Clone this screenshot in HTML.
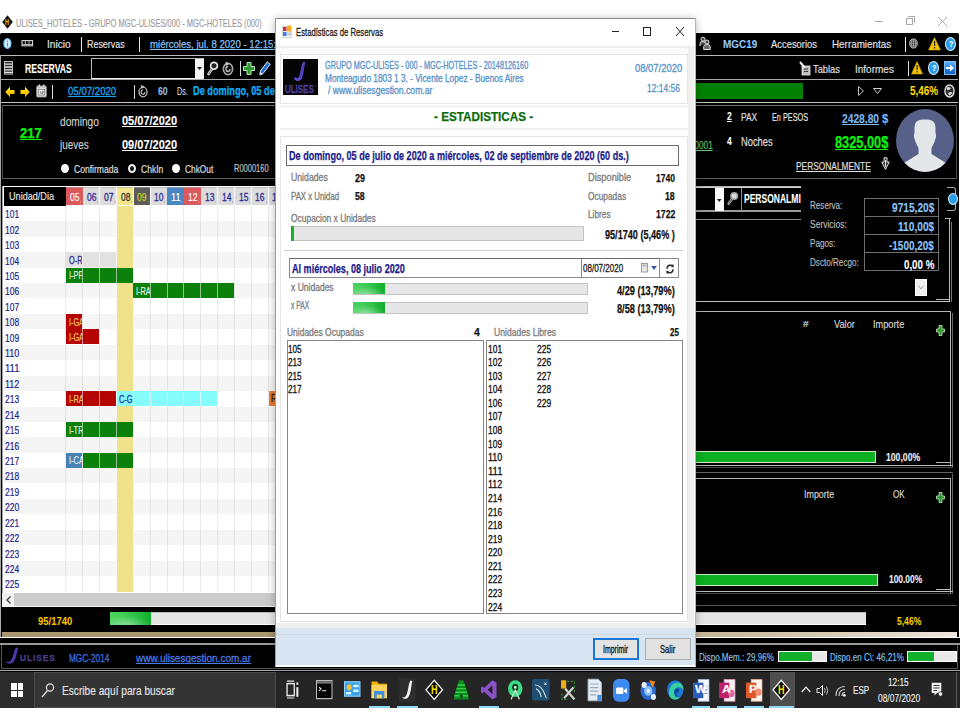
<!DOCTYPE html>
<html lang="es">
<head>
<meta charset="utf-8">
<title>ULISES_HOTELES - Estadísticas de Reservas</title>
<style>
html,body{margin:0;padding:0;background:#fff;}
body{width:960px;height:720px;overflow:hidden;font-family:"Liberation Sans",sans-serif;}
#s{position:relative;width:960px;height:720px;overflow:hidden;background:#fff;}
#s div,#s span,#s a,#s svg,#s button{position:absolute;box-sizing:border-box;}
#s .t{white-space:nowrap;transform-origin:0 50%;margin:0;padding:0;text-decoration-skip-ink:none;}
#s svg{overflow:visible;}
</style>
</head>
<body>
<div id="s">
<svg style="left:1.7px;top:15px;" width="11" height="14"><path d="M5.5 0.3L10.8 7L5.5 13.7L0.2 7Z" fill="#141414"/></svg>
<span class="t" style="left:5px;top:15.9px;font-size:9px;line-height:12px;color:#d4c400;font-weight:bold;transform:scaleX(0.614)">H</span>
<span class="t" style="left:16.4px;top:15.6px;font-size:11.5px;line-height:15px;color:#9a9a9a;-webkit-text-stroke:0.14px #9a9a9a;transform:scaleX(0.655)">ULISES_HOTELES - GRUPO MGC-ULISES/000 - MGC-HOTELES (000)</span>
<div style="left:875px;top:21px;width:8px;height:1px;background:#aaa;"></div>
<div style="left:906px;top:18px;width:7px;height:7px;background:transparent;border:1px solid #aaa;"></div>
<div style="left:908px;top:16px;width:7px;height:7px;background:transparent;border:1px solid #aaa;border-left:none;border-bottom:none;"></div>
<svg style="left:938px;top:17px;" width="9" height="9"><path d="M0 0L9 9M9 0L0 9" stroke="#aaa" stroke-width="1" fill="none"/></svg>
<div style="left:0px;top:33px;width:958.6px;height:639.5px;background:#000;border-radius:1.5px 1.5px 0 0;"></div>
<div style="left:0px;top:638px;width:960px;height:34.5px;background:#000;"></div>
<div style="left:1px;top:54.6px;width:957px;height:1.7px;background:#bcbcbc;"></div>
<svg style="left:3px;top:38px;" width="9" height="12"><ellipse cx="4.4" cy="5.5" rx="3.4" ry="4.7" fill="#eaf6ff" stroke="#78ccfa" stroke-width="1.5"/><rect x="3.8" y="4.8" width="1.3" height="3.6" fill="#2a9ae4"/><rect x="3.8" y="2.6" width="1.3" height="1.4" fill="#2a9ae4"/></svg>
<svg style="left:21px;top:40px;" width="13" height="7"><rect x="1" y="0.6" width="10.6" height="5.2" fill="#151515" stroke="#e4e4e4" stroke-width="1"/><path d="M4.3 1V4.2M8 1V4.2" stroke="#cfcfcf" stroke-width="0.8"/><path d="M1.5 4.6H11" stroke="#d8d8d8" stroke-width="0.9"/></svg>
<span class="t" style="left:47px;top:37.0px;font-size:11.04px;line-height:14px;color:#e4e4e4;-webkit-text-stroke:0.14px #e4e4e4;transform:scaleX(0.923)">Inicio</span>
<div style="left:81px;top:37.3px;width:1.3px;height:14.4px;background:#e8e8e8;"></div>
<span class="t" style="left:87px;top:37.0px;font-size:11.04px;line-height:14px;color:#e4e4e4;-webkit-text-stroke:0.14px #e4e4e4;transform:scaleX(0.809)">Reservas</span>
<div style="left:139px;top:37.3px;width:1.3px;height:14.4px;background:#e8e8e8;"></div>
<span class="t" style="left:150px;top:37.0px;font-size:11.04px;line-height:14px;color:#84c2f4;text-decoration:underline;-webkit-text-stroke:0.25px #84c2f4;transform:scaleX(0.871)">miércoles, jul. 8 2020 - 12:15:</span>
<svg style="left:699px;top:36px;" width="13" height="15"><circle cx="4" cy="3.2" r="2" fill="#444" stroke="#e4e4e4" stroke-width="1"/><path d="M1 10V7.5Q1 5.5 4 5.5Q6.5 5.5 6.5 7.5" fill="#555" stroke="#e4e4e4" stroke-width="1"/><circle cx="8" cy="6" r="2" fill="#444" stroke="#e4e4e4" stroke-width="1"/><path d="M4.7 13.5V10.5Q4.7 8.5 8 8.5Q11.2 8.5 11.2 10.5V13.5Z" fill="#666" stroke="#e4e4e4" stroke-width="1"/></svg>
<span class="t" style="left:723px;top:36.5px;font-size:11.4px;line-height:15px;color:#8cc8f8;font-weight:bold;-webkit-text-stroke:0.1px #8cc8f8;transform:scaleX(0.872)">MGC19</span>
<span class="t" style="left:771px;top:37.0px;font-size:11.04px;line-height:14px;color:#e4e4e4;-webkit-text-stroke:0.14px #e4e4e4;transform:scaleX(0.852)">Accesorios</span>
<span class="t" style="left:832px;top:37.0px;font-size:11.04px;line-height:14px;color:#e4e4e4;-webkit-text-stroke:0.14px #e4e4e4;transform:scaleX(0.894)">Herramientas</span>
<div style="left:905px;top:37.3px;width:1.3px;height:14.4px;background:#e8e8e8;"></div>
<svg style="left:909px;top:38px;" width="9" height="11"><ellipse cx="4.5" cy="5.5" rx="3.8" ry="4.6" fill="#3a3a3a" stroke="#c8c8c8" stroke-width="1"/><path d="M0.7 5.5H8.3M1.5 3.2H7.5M1.5 7.8H7.5M4.5 1V10M2.8 1.5Q1.8 5.5 2.8 9.5M6.2 1.5Q7.2 5.5 6.2 9.5" stroke="#bdbdbd" stroke-width="0.6" fill="none"/></svg>
<svg style="left:928px;top:37px;" width="13" height="14"><path d="M6.5 0.5L12.5 13H0.5Z" fill="#f5c400" stroke="#c79a00" stroke-width="0.6"/><rect x="6" y="4" width="1.2" height="5" fill="#222"/><rect x="6" y="10" width="1.2" height="1.5" fill="#222"/></svg>
<div style="left:945px;top:37px;width:11px;height:14px;border-radius:50%;background:#2a9fe8;border:1px solid #d4ecff;"></div>
<span class="t" style="left:948.5px;top:38.0px;font-size:9.5px;line-height:12px;color:#fff;font-weight:bold;-webkit-text-stroke:0.1px #fff;transform:scaleX(0.750)">?</span>
<div style="left:1px;top:79px;width:957px;height:1px;background:#a8a8a8;"></div>
<svg style="left:4px;top:61px;" width="9" height="14"><rect x="0.5" y="0.5" width="8" height="12.6" fill="#2a2a2a" stroke="#d8d8d8" stroke-width="0.9"/><path d="M1 3.2H8M1 6H8M1 8.8H8M1 11.4H8" stroke="#e4e4e4" stroke-width="1.3"/></svg>
<span class="t" style="left:25px;top:60.5px;font-size:12.35px;line-height:16px;color:#fff;font-weight:bold;-webkit-text-stroke:0.1px #fff;transform:scaleX(0.701)">RESERVAS</span>
<div style="left:91px;top:58px;width:113px;height:21px;background:#000;border:1px solid #b8b8b8;border-bottom-color:#f4f4f4;"></div>
<div style="left:195px;top:59px;width:9px;height:19px;background:#f4f4f4;"></div>
<svg style="left:197px;top:67px;" width="5" height="3"><path d="M0 0H5L2.5 3Z" fill="#222"/></svg>
<svg style="left:207px;top:61px;" width="12" height="15"><circle cx="7" cy="4.8" r="3.4" fill="#222" stroke="#e8e8e8" stroke-width="1.7"/><path d="M5 8L1.5 13" stroke="#e8e8e8" stroke-width="2.6" stroke-linecap="round"/><path d="M5 8L1.5 13" stroke="#333" stroke-width="0.8"/></svg>
<svg style="left:222px;top:61px;" width="12" height="15"><ellipse cx="6" cy="8" rx="4.6" ry="5.6" fill="none" stroke="#a8a8a8" stroke-width="1.6"/><path d="M6 5.5a2 2.5 0 1 0 2 2.5" fill="none" stroke="#b8b8b8" stroke-width="1.4"/><path d="M3.5 0.5L7.5 2.8L4 5Z" fill="#c4c4c4"/></svg>
<div style="left:240px;top:61px;width:1px;height:15px;background:#ddd;"></div>
<svg style="left:243px;top:62px;" width="12" height="13"><path d="M4 0.5H8V4.5H11.5V8.5H8V12.5H4V8.5H0.5V4.5H4Z" fill="#2e9a2e" stroke="#bfe8bf" stroke-width="1"/></svg>
<svg style="left:259px;top:61px;" width="12" height="15"><path d="M8.3 0.8L11.2 3.4L4 12.6L0.8 14L1.4 10Z" fill="#1f6fd4" stroke="#e4f0ff" stroke-width="1"/><path d="M1.2 11.5L3.2 13" stroke="#fff" stroke-width="1"/></svg>
<svg style="left:799px;top:61px;" width="12" height="15"><rect x="3" y="5" width="8" height="9" fill="#bbb" stroke="#eee" stroke-width="0.8"/><path d="M1 1L6 7" stroke="#eee" stroke-width="2"/><path d="M5 8H9M5 10.5H9" stroke="#333" stroke-width="1"/></svg>
<span class="t" style="left:813px;top:61.5px;font-size:11.04px;line-height:14px;color:#e4e4e4;-webkit-text-stroke:0.14px #e4e4e4;transform:scaleX(0.844)">Tablas</span>
<span class="t" style="left:855px;top:61.5px;font-size:11.04px;line-height:14px;color:#e4e4e4;-webkit-text-stroke:0.14px #e4e4e4;transform:scaleX(0.907)">Informes</span>
<div style="left:908px;top:61px;width:1px;height:15px;background:#ddd;"></div>
<svg style="left:911px;top:61px;" width="12" height="14"><path d="M6 0.5L11.5 13H0.5Z" fill="#f5c400" stroke="#c79a00" stroke-width="0.6"/><rect x="5.5" y="4" width="1.2" height="5" fill="#222"/><rect x="5.5" y="10" width="1.2" height="1.5" fill="#222"/></svg>
<div style="left:928px;top:61px;width:11px;height:14px;border-radius:50%;background:#2a9fe8;border:1px solid #d4ecff;"></div>
<span class="t" style="left:931.5px;top:62.0px;font-size:9.5px;line-height:12px;color:#fff;font-weight:bold;-webkit-text-stroke:0.1px #fff;transform:scaleX(0.750)">?</span>
<div style="left:944px;top:61px;width:12px;height:14px;background:#2f86dc;background:linear-gradient(#5ab4f6,#2a86e0 50%,#1a5cc0);border:1px solid #7fc0ff;"></div>
<svg style="left:946px;top:64px;" width="8" height="8"><path d="M0 3H4V0.5L8 4L4 7.5V5H0Z" fill="#fff"/></svg>
<div style="left:1px;top:101.6px;width:957px;height:1px;background:#c4c4c4;"></div>
<svg style="left:4.6px;top:85.6px;" width="10" height="12"><defs><linearGradient id="ya" x1="0" y1="0" x2="0" y2="1"><stop offset="0" stop-color="#fff06a"/><stop offset="0.45" stop-color="#ffd400"/><stop offset="1" stop-color="#e89a00"/></linearGradient></defs><path d="M0.3 6L5 0.8V4H9.5V8H5V11.2Z" fill="url(#ya)"/></svg>
<svg style="left:20.2px;top:85.6px;" width="10" height="12"><path d="M9.7 6L5 0.8V4H0.5V8H5V11.2Z" fill="url(#ya)"/></svg>
<svg style="left:36px;top:84px;" width="11" height="14"><rect x="0.7" y="2" width="9.6" height="11" rx="1" fill="#dcdcdc" stroke="#a0a0a0" stroke-width="0.8"/><rect x="2.3" y="5.5" width="6.4" height="5.5" fill="#f8f8f8" stroke="#666" stroke-width="0.6"/><path d="M4.3 7V10M5.6 7.2H7.4V8.5H5.8V10H7.5" stroke="#444" stroke-width="0.6" fill="none"/><rect x="2.5" y="0.5" width="1.6" height="3.2" rx="0.6" fill="#f0f0f0" stroke="#777" stroke-width="0.4"/><rect x="6.9" y="0.5" width="1.6" height="3.2" rx="0.6" fill="#f0f0f0" stroke="#777" stroke-width="0.4"/></svg>
<div style="left:52px;top:85px;width:1px;height:14px;background:#ddd;"></div>
<span class="t" style="left:68px;top:84.0px;font-size:11.04px;line-height:14px;color:#18a4ee;text-decoration:underline;-webkit-text-stroke:0.3px #18a4ee;transform:scaleX(0.873)">05/07/2020</span>
<div style="left:134px;top:85px;width:1px;height:14px;background:#ddd;"></div>
<svg style="left:138px;top:84px;" width="10" height="14"><ellipse cx="5" cy="8" rx="4" ry="4.8" fill="none" stroke="#bdbdbd" stroke-width="1.3"/><path d="M5 5.8a1.8 2.2 0 1 0 1.8 2.2" fill="none" stroke="#c8c8c8" stroke-width="1.1"/><path d="M3 0.8L6.8 3L3.4 4.8Z" fill="#c8c8c8"/></svg>
<span class="t" style="left:158px;top:83.5px;font-size:11.4px;line-height:15px;color:#8fbde6;font-weight:bold;-webkit-text-stroke:0.1px #8fbde6;transform:scaleX(0.769)">60</span>
<span class="t" style="left:177px;top:84.0px;font-size:11.04px;line-height:14px;color:#d8d8d8;-webkit-text-stroke:0.14px #d8d8d8;transform:scaleX(0.647)">Ds.</span>
<span class="t" style="left:193px;top:83.0px;font-size:12.35px;line-height:16px;color:#10aef4;font-weight:bold;-webkit-text-stroke:0.25px #10aef4;transform:scaleX(0.745)">De domingo, 05 de</span>
<div style="left:690px;top:83px;width:113px;height:16px;background:#018001;"></div>
<svg style="left:858px;top:86px;" width="6" height="10"><path d="M0.5 0.5L5.5 5L0.5 9.5Z" fill="none" stroke="#bbb" stroke-width="1"/></svg>
<svg style="left:873px;top:88px;" width="9" height="6"><path d="M0.5 0.5H8.5L4.5 5.5Z" fill="none" stroke="#ccc" stroke-width="1"/></svg>
<span class="t" style="left:910px;top:83.0px;font-size:12.35px;line-height:16px;color:#f6dc00;font-weight:bold;-webkit-text-stroke:0.1px #f6dc00;transform:scaleX(0.800)">5,46%</span>
<svg style="left:944px;top:84px;" width="11" height="14"><ellipse cx="5.5" cy="7" rx="4.6" ry="6" fill="#2a2a2a" stroke="#e0e0e0" stroke-width="1.4"/><path d="M2.5 4Q5 2 7 4.5Q5 6 3.5 6.5ZM4 9Q6.5 7.5 8.5 8.5Q7.5 11 5 11.5Z" fill="#d8d8d8"/></svg>
<div style="left:2px;top:104.6px;width:955px;height:74.6px;background:#000;border:1px solid #4a4a4a;border-top:1px solid #707070;border-bottom:1px solid #5a5a5a;"></div>
<span class="t" style="left:20px;top:124.3px;font-size:14.25px;line-height:19px;color:#0cf20c;font-weight:bold;text-decoration:underline;-webkit-text-stroke:0.25px #0cf20c;transform:scaleX(0.917)">217</span>
<span class="t" style="left:60px;top:113.5px;font-size:11.96px;line-height:16px;color:#d0d0d0;-webkit-text-stroke:0.14px #d0d0d0;transform:scaleX(0.848)">domingo</span>
<span class="t" style="left:122px;top:111.7px;font-size:12.82px;line-height:17px;color:#fff;font-weight:bold;text-decoration:underline;-webkit-text-stroke:0.1px #fff;transform:scaleX(0.859)">05/07/2020</span>
<span class="t" style="left:60px;top:136.5px;font-size:11.96px;line-height:16px;color:#d0d0d0;-webkit-text-stroke:0.14px #d0d0d0;transform:scaleX(0.829)">jueves</span>
<span class="t" style="left:122px;top:135.7px;font-size:12.82px;line-height:17px;color:#fff;font-weight:bold;text-decoration:underline;-webkit-text-stroke:0.1px #fff;transform:scaleX(0.859)">09/07/2020</span>
<div style="left:61px;top:164px;width:8px;height:9px;border-radius:50%;background:#fff;"></div>
<span class="t" style="left:74px;top:162.5px;font-size:10.12px;line-height:13px;color:#e0e0e0;-webkit-text-stroke:0.14px #e0e0e0;transform:scaleX(0.846)">Confirmada</span>
<div style="left:128px;top:164px;width:8px;height:9px;border-radius:50%;background:#111;border:2px solid #f0f0f0;"></div>
<span class="t" style="left:141px;top:162.5px;font-size:10.12px;line-height:13px;color:#e0e0e0;-webkit-text-stroke:0.14px #e0e0e0;transform:scaleX(0.846)">ChkIn</span>
<div style="left:172px;top:164px;width:8px;height:9px;border-radius:50%;background:#fff;"></div>
<span class="t" style="left:185px;top:162.5px;font-size:10.12px;line-height:13px;color:#e0e0e0;-webkit-text-stroke:0.14px #e0e0e0;transform:scaleX(0.824)">ChkOut</span>
<span class="t" style="left:234px;top:162.3px;font-size:10.3px;line-height:13px;color:#c8c8c8;-webkit-text-stroke:0.14px #c8c8c8;transform:scaleX(0.729)">R0000160</span>
<span class="t" style="left:689.5px;top:137.8px;font-size:10.5px;line-height:14px;color:#6fc86f;text-decoration:underline;-webkit-text-stroke:0.14px #6fc86f;transform:scaleX(0.776)">00001</span>
<span class="t" style="left:726.5px;top:109.0px;font-size:11.4px;line-height:15px;color:#fff;font-weight:bold;text-decoration:underline;-webkit-text-stroke:0.1px #fff;transform:scaleX(0.750)">2</span>
<span class="t" style="left:741px;top:109.8px;font-size:11.04px;line-height:14px;color:#e0e0e0;-webkit-text-stroke:0.14px #e0e0e0;transform:scaleX(0.762)">PAX</span>
<span class="t" style="left:772px;top:110.6px;font-size:10.12px;line-height:13px;color:#e8e8e8;-webkit-text-stroke:0.14px #e8e8e8;transform:scaleX(0.720)">En PESOS</span>
<span class="t" style="left:842px;top:110.0px;font-size:13.3px;line-height:17px;color:#7ab8f0;font-weight:bold;text-decoration:underline;-webkit-text-stroke:0.1px #7ab8f0;transform:scaleX(0.771)">2428,80</span>
<span class="t" style="left:882px;top:110.0px;font-size:13.3px;line-height:17px;color:#7ab8f0;font-weight:bold;-webkit-text-stroke:0.1px #7ab8f0;transform:scaleX(0.857)">$</span>
<span class="t" style="left:726.5px;top:134.0px;font-size:11.4px;line-height:15px;color:#fff;font-weight:bold;-webkit-text-stroke:0.1px #fff;transform:scaleX(0.750)">4</span>
<span class="t" style="left:741px;top:134.0px;font-size:11.96px;line-height:16px;color:#e0e0e0;-webkit-text-stroke:0.14px #e0e0e0;transform:scaleX(0.780)">Noches</span>
<span class="t" style="left:835px;top:131.5px;font-size:16.15px;line-height:21px;color:#0cf20c;font-weight:bold;text-decoration:underline;-webkit-text-stroke:0.25px #0cf20c;transform:scaleX(0.791)">8325,00$</span>
<span class="t" style="left:796px;top:158.8px;font-size:11.04px;line-height:14px;color:#e0e0e0;text-decoration:underline;-webkit-text-stroke:0.14px #e0e0e0;transform:scaleX(0.758)">PERSONALMENTE</span>
<svg style="left:881px;top:157px;" width="9" height="14"><path d="M3 0.7H6V5H8.3L4.5 12.5L0.7 5H3Z" fill="#3a3a3a" stroke="#d8d8d8" stroke-width="1"/><path d="M4.5 3V10" stroke="#e8e8e8" stroke-width="1"/></svg>
<svg style="left:896px;top:109px;" width="58" height="63" viewBox="0 0 58 63"><ellipse cx="29" cy="31.5" rx="29" ry="31.5" fill="#566089"/><clipPath id="av"><ellipse cx="29" cy="31.5" rx="29" ry="31.5"/></clipPath><g clip-path="url(#av)" fill="#e3e7ea"><path d="M18.5 19C18.5 11.5 23 10.5 29 10.5S39.5 11.5 39.5 19V24C40.3 25 40.3 29 39.3 30C38.5 34 36.5 37 35.5 39V45L50 54V68H8V54L22.5 45V39C21.5 37 19.5 34 18.7 30C17.7 29 17.7 25 18.5 24Z"/></g></svg>
<div style="left:696px;top:185.6px;width:104.6px;height:2.6px;background:#c8c8c8;background:linear-gradient(#8a8a8a,#e4e4e4 60%,#bdbdbd);"></div>
<div style="left:696px;top:210.4px;width:104.6px;height:1.4px;background:#9a9a9a;"></div>
<div style="left:714.8px;top:188px;width:9px;height:23px;background:#f8f8f8;"></div>
<svg style="left:717px;top:198.5px;" width="4.5" height="3"><path d="M0 0H4.5L2.25 3Z" fill="#222"/></svg>
<svg style="left:726.5px;top:190.5px;" width="12" height="15"><circle cx="7.2" cy="5" r="3.3" fill="#d8d8d8" stroke="#9c9c9c" stroke-width="1.5"/><path d="M5 8L1.7 12.6" stroke="#a8a8a8" stroke-width="2.6" stroke-linecap="round"/><path d="M5 8L1.7 12.6" stroke="#222" stroke-width="0.7"/></svg>
<div style="left:741px;top:188px;width:1.2px;height:23px;background:#8c8c8c;"></div>
<span class="t" style="left:744px;top:191.3px;font-size:12.35px;line-height:16px;color:#fff;font-weight:bold;-webkit-text-stroke:0.1px #fff;transform:scaleX(0.690)">PERSONALMI</span>
<div style="left:696px;top:218.5px;width:104.6px;height:1.2px;background:#8c8c8c;"></div>
<span class="t" style="left:810px;top:198.5px;font-size:10.12px;line-height:13px;color:#bdbdbd;-webkit-text-stroke:0.14px #bdbdbd;transform:scaleX(0.800)">Reserva:</span>
<div style="left:864px;top:198px;width:75px;height:19px;background:#000;border:1px solid #6e6e6e;"></div>
<span class="t" style="left:892px;top:198.5px;font-size:13.3px;line-height:17px;color:#8ec6f7;font-weight:bold;-webkit-text-stroke:0.1px #8ec6f7;transform:scaleX(0.764)">9715,20$</span>
<span class="t" style="left:810px;top:217.5px;font-size:10.12px;line-height:13px;color:#bdbdbd;-webkit-text-stroke:0.14px #bdbdbd;transform:scaleX(0.841)">Servicios:</span>
<div style="left:864px;top:216px;width:75px;height:19px;background:#000;border:1px solid #6e6e6e;"></div>
<span class="t" style="left:898px;top:217.5px;font-size:13.3px;line-height:17px;color:#8ec6f7;font-weight:bold;-webkit-text-stroke:0.1px #8ec6f7;transform:scaleX(0.766)">110,00$</span>
<span class="t" style="left:810px;top:236.5px;font-size:10.12px;line-height:13px;color:#bdbdbd;-webkit-text-stroke:0.14px #bdbdbd;transform:scaleX(0.806)">Pagos:</span>
<div style="left:864px;top:234px;width:75px;height:19px;background:#000;border:1px solid #6e6e6e;"></div>
<span class="t" style="left:889px;top:236.5px;font-size:13.3px;line-height:17px;color:#8ec6f7;font-weight:bold;-webkit-text-stroke:0.1px #8ec6f7;transform:scaleX(0.750)">-1500,20$</span>
<span class="t" style="left:810px;top:255.5px;font-size:10.12px;line-height:13px;color:#bdbdbd;-webkit-text-stroke:0.14px #bdbdbd;transform:scaleX(0.803)">Dscto/Recgo:</span>
<div style="left:864px;top:252px;width:75px;height:19px;background:#000;border:1px solid #6e6e6e;"></div>
<span class="t" style="left:904px;top:255.5px;font-size:13.3px;line-height:17px;color:#fff;font-weight:bold;-webkit-text-stroke:0.1px #fff;transform:scaleX(0.732)">0,00 %</span>
<div style="left:915px;top:279px;width:12px;height:17px;background:#efefef;border:1px solid #fff;"></div>
<svg style="left:918px;top:285px;" width="6" height="5"><path d="M0.5 0.5L3 4L5.5 0.5" fill="none" stroke="#aaa" stroke-width="1"/></svg>
<div style="left:947px;top:187px;width:9px;height:24px;background:transparent;border:1px solid #aaa;border-left:none;border-radius:0 3px 3px 0;"></div>
<div style="left:948px;top:193px;width:10px;height:12px;border-radius:50%;background:#2a9fe8;border:1px solid #d4ecff;"></div>
<div style="left:945px;top:218px;width:6px;height:1px;background:#bdbdbd;"></div>
<div style="left:949px;top:218px;width:1px;height:84px;background:#bdbdbd;"></div>
<div style="left:951px;top:222px;width:1px;height:80px;background:#777;"></div>
<div style="left:696px;top:301px;width:254px;height:1px;background:#c4c4c4;"></div>
<div style="left:936px;top:299px;width:14px;height:1px;background:#bbb;"></div>
<div style="left:696px;top:311px;width:255px;height:1px;background:#b4b4b4;"></div>
<div style="left:950px;top:311px;width:1px;height:155px;background:#b4b4b4;"></div>
<div style="left:952px;top:313px;width:1px;height:155px;background:#666;"></div>
<span class="t" style="left:802.5px;top:318.0px;font-size:9.2px;line-height:12px;color:#e0e0e0;-webkit-text-stroke:0.14px #e0e0e0;transform:scaleX(1.100)">#</span>
<span class="t" style="left:834px;top:317.5px;font-size:10.12px;line-height:13px;color:#d8d8d8;-webkit-text-stroke:0.14px #d8d8d8;transform:scaleX(0.913)">Valor</span>
<span class="t" style="left:873px;top:317.5px;font-size:10.12px;line-height:13px;color:#d8d8d8;-webkit-text-stroke:0.14px #d8d8d8;transform:scaleX(0.912)">Importe</span>
<svg style="left:936px;top:325px;" width="9" height="11"><path d="M3 0.5H6V4H8.5V7H6V10.5H3V7H0.5V4H3Z" fill="#2e9a2e" stroke="#bfe8bf" stroke-width="0.8"/></svg>
<div style="left:696px;top:451px;width:180px;height:12px;background:#0cb020;border:1px solid #d0e8d0;border-left:none;"></div>
<span class="t" style="left:886px;top:451.0px;font-size:10.45px;line-height:14px;color:#f0f0f0;font-weight:bold;-webkit-text-stroke:0.1px #f0f0f0;transform:scaleX(0.829)">100,00%</span>
<div style="left:936px;top:462px;width:14px;height:1px;background:#bbb;"></div>
<div style="left:696px;top:465px;width:257px;height:1px;background:#bbb;"></div>
<div style="left:696px;top:467px;width:257px;height:1px;background:#444;"></div>
<div style="left:696px;top:472px;width:257px;height:1px;background:#666;"></div>
<div style="left:696px;top:478px;width:254px;height:1px;background:#b4b4b4;"></div>
<div style="left:950px;top:478px;width:1px;height:115px;background:#b4b4b4;"></div>
<div style="left:952px;top:474px;width:1px;height:119px;background:#666;"></div>
<span class="t" style="left:804px;top:487.5px;font-size:10.12px;line-height:13px;color:#d8d8d8;-webkit-text-stroke:0.14px #d8d8d8;transform:scaleX(0.882)">Importe</span>
<span class="t" style="left:893px;top:487.5px;font-size:10.12px;line-height:13px;color:#d8d8d8;-webkit-text-stroke:0.14px #d8d8d8;transform:scaleX(0.800)">OK</span>
<svg style="left:936px;top:492px;" width="9" height="11"><path d="M3 0.5H6V4H8.5V7H6V10.5H3V7H0.5V4H3Z" fill="#2e9a2e" stroke="#bfe8bf" stroke-width="0.8"/></svg>
<div style="left:696px;top:574px;width:182px;height:12px;background:#0cb020;border:1px solid #d0e8d0;border-left:none;"></div>
<span class="t" style="left:889px;top:573.0px;font-size:10.45px;line-height:14px;color:#f0f0f0;font-weight:bold;-webkit-text-stroke:0.1px #f0f0f0;transform:scaleX(0.805)">100.00%</span>
<div style="left:936px;top:589px;width:14px;height:1px;background:#bbb;"></div>
<div style="left:696px;top:591px;width:257px;height:1px;background:#bbb;"></div>
<div style="left:696px;top:593px;width:257px;height:1px;background:#444;"></div>
<div style="left:696px;top:605px;width:261px;height:1px;background:#555;"></div>
<div style="left:0px;top:55px;width:1.3px;height:583px;background:#a8a8a8;"></div>
<div style="left:2.4px;top:186px;width:273.6px;height:421px;background:#fff;"></div>
<div style="left:1.7px;top:186px;width:0.9px;height:421px;background:#a4a4a4;"></div>
<div style="left:4px;top:187px;width:62px;height:19px;background:#000;"></div>
<span class="t" style="left:9px;top:189.8px;font-size:10.12px;line-height:13px;color:#e8e8e8;-webkit-text-stroke:0.14px #e8e8e8;transform:scaleX(0.900)">Unidad/Dia</span>
<div style="left:66.3px;top:186.6px;width:16.35px;height:18.6px;background:#d9595c;border-top:1px solid rgba(160,160,160,0.55);"></div>
<span class="t" style="left:70.0px;top:190.0px;font-size:10.6px;line-height:14px;color:#fff;-webkit-text-stroke:0.14px #fff;transform:scaleX(0.800)">05</span>
<span class="t" style="left:80.2px;top:195.5px;font-size:6.44px;line-height:8px;color:#fff;transform:scaleX(0.600)">,</span>
<div style="left:83.1px;top:186.6px;width:16.35px;height:18.6px;background:#dcdcdc;border-top:1px solid rgba(160,160,160,0.55);"></div>
<span class="t" style="left:86.8px;top:190.0px;font-size:10.6px;line-height:14px;color:#2a2a9a;-webkit-text-stroke:0.3px #2a2a9a;transform:scaleX(0.800)">06</span>
<span class="t" style="left:97.0px;top:195.5px;font-size:6.44px;line-height:8px;color:#2a2a9a;transform:scaleX(0.600)">,</span>
<div style="left:100.0px;top:186.6px;width:16.35px;height:18.6px;background:#dcdcdc;border-top:1px solid rgba(160,160,160,0.55);"></div>
<span class="t" style="left:103.7px;top:190.0px;font-size:10.6px;line-height:14px;color:#2a2a9a;-webkit-text-stroke:0.3px #2a2a9a;transform:scaleX(0.800)">07</span>
<span class="t" style="left:113.9px;top:195.5px;font-size:6.44px;line-height:8px;color:#2a2a9a;transform:scaleX(0.600)">,</span>
<div style="left:116.9px;top:186.6px;width:16.35px;height:18.6px;background:#f3e68c;border-top:1px solid rgba(160,160,160,0.55);"></div>
<span class="t" style="left:120.6px;top:190.0px;font-size:10.6px;line-height:14px;color:#333;-webkit-text-stroke:0.3px #333;transform:scaleX(0.800)">08</span>
<span class="t" style="left:130.8px;top:195.5px;font-size:6.44px;line-height:8px;color:#333;transform:scaleX(0.600)">,</span>
<div style="left:133.7px;top:186.6px;width:16.35px;height:18.6px;background:#5c5c5c;border-top:1px solid rgba(160,160,160,0.55);"></div>
<span class="t" style="left:137.4px;top:190.0px;font-size:10.6px;line-height:14px;color:#d8d820;-webkit-text-stroke:0.14px #d8d820;transform:scaleX(0.800)">09</span>
<span class="t" style="left:147.6px;top:195.5px;font-size:6.44px;line-height:8px;color:#d8d820;transform:scaleX(0.600)">,</span>
<div style="left:150.6px;top:186.6px;width:16.35px;height:18.6px;background:#dcdcdc;border-top:1px solid rgba(160,160,160,0.55);"></div>
<span class="t" style="left:154.2px;top:190.0px;font-size:10.6px;line-height:14px;color:#2a2a9a;-webkit-text-stroke:0.3px #2a2a9a;transform:scaleX(0.800)">10</span>
<span class="t" style="left:164.4px;top:195.5px;font-size:6.44px;line-height:8px;color:#2a2a9a;transform:scaleX(0.650)">,</span>
<div style="left:167.4px;top:186.6px;width:16.35px;height:18.6px;background:#4a86c0;border-top:1px solid rgba(160,160,160,0.55);"></div>
<span class="t" style="left:171.1px;top:190.0px;font-size:10.6px;line-height:14px;color:#fff;-webkit-text-stroke:0.14px #fff;transform:scaleX(0.873)">11</span>
<span class="t" style="left:181.3px;top:195.5px;font-size:6.44px;line-height:8px;color:#fff;transform:scaleX(0.600)">,</span>
<div style="left:184.3px;top:186.6px;width:16.35px;height:18.6px;background:#d9595c;border-top:1px solid rgba(160,160,160,0.55);"></div>
<span class="t" style="left:188.0px;top:190.0px;font-size:10.6px;line-height:14px;color:#fff;-webkit-text-stroke:0.14px #fff;transform:scaleX(0.800)">12</span>
<span class="t" style="left:198.2px;top:195.5px;font-size:6.44px;line-height:8px;color:#fff;transform:scaleX(0.600)">,</span>
<div style="left:201.1px;top:186.6px;width:16.35px;height:18.6px;background:#dcdcdc;border-top:1px solid rgba(160,160,160,0.55);"></div>
<span class="t" style="left:204.8px;top:190.0px;font-size:10.6px;line-height:14px;color:#2a2a9a;-webkit-text-stroke:0.3px #2a2a9a;transform:scaleX(0.800)">13</span>
<span class="t" style="left:215.0px;top:195.5px;font-size:6.44px;line-height:8px;color:#2a2a9a;transform:scaleX(0.600)">,</span>
<div style="left:218.0px;top:186.6px;width:16.35px;height:18.6px;background:#dcdcdc;border-top:1px solid rgba(160,160,160,0.55);"></div>
<span class="t" style="left:221.7px;top:190.0px;font-size:10.6px;line-height:14px;color:#2a2a9a;-webkit-text-stroke:0.3px #2a2a9a;transform:scaleX(0.792)">14</span>
<span class="t" style="left:231.8px;top:195.5px;font-size:6.44px;line-height:8px;color:#2a2a9a;transform:scaleX(0.650)">,</span>
<div style="left:234.8px;top:186.6px;width:16.35px;height:18.6px;background:#dcdcdc;border-top:1px solid rgba(160,160,160,0.55);"></div>
<span class="t" style="left:238.5px;top:190.0px;font-size:10.6px;line-height:14px;color:#2a2a9a;-webkit-text-stroke:0.3px #2a2a9a;transform:scaleX(0.800)">15</span>
<span class="t" style="left:248.7px;top:195.5px;font-size:6.44px;line-height:8px;color:#2a2a9a;transform:scaleX(0.600)">,</span>
<div style="left:251.7px;top:186.6px;width:16.35px;height:18.6px;background:#dcdcdc;border-top:1px solid rgba(160,160,160,0.55);"></div>
<span class="t" style="left:255.4px;top:190.0px;font-size:10.6px;line-height:14px;color:#2a2a9a;-webkit-text-stroke:0.3px #2a2a9a;transform:scaleX(0.800)">16</span>
<span class="t" style="left:265.6px;top:195.5px;font-size:6.44px;line-height:8px;color:#2a2a9a;transform:scaleX(0.600)">,</span>
<div style="left:268.5px;top:186.6px;width:16.35px;height:18.6px;background:#dcdcdc;border-top:1px solid rgba(160,160,160,0.55);"></div>
<span class="t" style="left:272.2px;top:190.0px;font-size:10.6px;line-height:14px;color:#2a2a9a;-webkit-text-stroke:0.3px #2a2a9a;transform:scaleX(0.800)">17</span>
<span class="t" style="left:282.4px;top:195.5px;font-size:6.44px;line-height:8px;color:#2a2a9a;transform:scaleX(0.600)">,</span>
<span class="t" style="left:5.4px;top:207.2px;font-size:10.8px;line-height:14px;color:#1c1c8e;-webkit-text-stroke:0.18px #1c1c8e;transform:scaleX(0.783)">101</span>
<div style="left:4px;top:221.4px;width:272px;height:15.4px;background:#f5f5f5;"></div>
<span class="t" style="left:5.4px;top:222.6px;font-size:10.8px;line-height:14px;color:#1c1c8e;-webkit-text-stroke:0.18px #1c1c8e;transform:scaleX(0.783)">102</span>
<span class="t" style="left:5.4px;top:238.1px;font-size:10.8px;line-height:14px;color:#1c1c8e;-webkit-text-stroke:0.18px #1c1c8e;transform:scaleX(0.783)">103</span>
<div style="left:4px;top:252.3px;width:272px;height:15.4px;background:#f5f5f5;"></div>
<span class="t" style="left:5.4px;top:253.5px;font-size:10.8px;line-height:14px;color:#1c1c8e;-webkit-text-stroke:0.18px #1c1c8e;transform:scaleX(0.783)">104</span>
<span class="t" style="left:5.4px;top:268.9px;font-size:10.8px;line-height:14px;color:#1c1c8e;-webkit-text-stroke:0.18px #1c1c8e;transform:scaleX(0.783)">105</span>
<div style="left:4px;top:283.1px;width:272px;height:15.4px;background:#f5f5f5;"></div>
<span class="t" style="left:5.4px;top:284.3px;font-size:10.8px;line-height:14px;color:#1c1c8e;-webkit-text-stroke:0.18px #1c1c8e;transform:scaleX(0.783)">106</span>
<span class="t" style="left:5.4px;top:299.7px;font-size:10.8px;line-height:14px;color:#1c1c8e;-webkit-text-stroke:0.18px #1c1c8e;transform:scaleX(0.783)">107</span>
<div style="left:4px;top:313.9px;width:272px;height:15.4px;background:#f5f5f5;"></div>
<span class="t" style="left:5.4px;top:315.1px;font-size:10.8px;line-height:14px;color:#1c1c8e;-webkit-text-stroke:0.18px #1c1c8e;transform:scaleX(0.783)">108</span>
<span class="t" style="left:5.4px;top:330.6px;font-size:10.8px;line-height:14px;color:#1c1c8e;-webkit-text-stroke:0.18px #1c1c8e;transform:scaleX(0.783)">109</span>
<div style="left:4px;top:344.8px;width:272px;height:15.4px;background:#f5f5f5;"></div>
<span class="t" style="left:5.4px;top:346.0px;font-size:10.8px;line-height:14px;color:#1c1c8e;-webkit-text-stroke:0.18px #1c1c8e;transform:scaleX(0.829)">110</span>
<span class="t" style="left:5.4px;top:361.4px;font-size:10.8px;line-height:14px;color:#1c1c8e;-webkit-text-stroke:0.18px #1c1c8e;transform:scaleX(0.881)">111</span>
<div style="left:4px;top:375.6px;width:272px;height:15.4px;background:#f5f5f5;"></div>
<span class="t" style="left:5.4px;top:376.8px;font-size:10.8px;line-height:14px;color:#1c1c8e;-webkit-text-stroke:0.18px #1c1c8e;transform:scaleX(0.829)">112</span>
<span class="t" style="left:5.4px;top:392.2px;font-size:10.8px;line-height:14px;color:#1c1c8e;-webkit-text-stroke:0.18px #1c1c8e;transform:scaleX(0.783)">213</span>
<div style="left:4px;top:406.5px;width:272px;height:15.4px;background:#f5f5f5;"></div>
<span class="t" style="left:5.4px;top:407.7px;font-size:10.8px;line-height:14px;color:#1c1c8e;-webkit-text-stroke:0.18px #1c1c8e;transform:scaleX(0.783)">214</span>
<span class="t" style="left:5.4px;top:423.1px;font-size:10.8px;line-height:14px;color:#1c1c8e;-webkit-text-stroke:0.18px #1c1c8e;transform:scaleX(0.783)">215</span>
<div style="left:4px;top:437.3px;width:272px;height:15.4px;background:#f5f5f5;"></div>
<span class="t" style="left:5.4px;top:438.5px;font-size:10.8px;line-height:14px;color:#1c1c8e;-webkit-text-stroke:0.18px #1c1c8e;transform:scaleX(0.783)">216</span>
<span class="t" style="left:5.4px;top:453.9px;font-size:10.8px;line-height:14px;color:#1c1c8e;-webkit-text-stroke:0.18px #1c1c8e;transform:scaleX(0.783)">217</span>
<div style="left:4px;top:468.1px;width:272px;height:15.4px;background:#f5f5f5;"></div>
<span class="t" style="left:5.4px;top:469.3px;font-size:10.8px;line-height:14px;color:#1c1c8e;-webkit-text-stroke:0.18px #1c1c8e;transform:scaleX(0.783)">218</span>
<span class="t" style="left:5.4px;top:484.8px;font-size:10.8px;line-height:14px;color:#1c1c8e;-webkit-text-stroke:0.18px #1c1c8e;transform:scaleX(0.783)">219</span>
<div style="left:4px;top:499.0px;width:272px;height:15.4px;background:#f5f5f5;"></div>
<span class="t" style="left:5.4px;top:500.2px;font-size:10.8px;line-height:14px;color:#1c1c8e;-webkit-text-stroke:0.18px #1c1c8e;transform:scaleX(0.783)">220</span>
<span class="t" style="left:5.4px;top:515.6px;font-size:10.8px;line-height:14px;color:#1c1c8e;-webkit-text-stroke:0.18px #1c1c8e;transform:scaleX(0.783)">221</span>
<div style="left:4px;top:529.8px;width:272px;height:15.4px;background:#f5f5f5;"></div>
<span class="t" style="left:5.4px;top:531.0px;font-size:10.8px;line-height:14px;color:#1c1c8e;-webkit-text-stroke:0.18px #1c1c8e;transform:scaleX(0.783)">222</span>
<span class="t" style="left:5.4px;top:546.5px;font-size:10.8px;line-height:14px;color:#1c1c8e;-webkit-text-stroke:0.18px #1c1c8e;transform:scaleX(0.783)">223</span>
<div style="left:4px;top:560.7px;width:272px;height:15.4px;background:#f5f5f5;"></div>
<span class="t" style="left:5.4px;top:561.9px;font-size:10.8px;line-height:14px;color:#1c1c8e;-webkit-text-stroke:0.18px #1c1c8e;transform:scaleX(0.783)">224</span>
<span class="t" style="left:5.4px;top:577.3px;font-size:10.8px;line-height:14px;color:#1c1c8e;-webkit-text-stroke:0.18px #1c1c8e;transform:scaleX(0.783)">225</span>
<div style="left:116.6px;top:206px;width:16.35px;height:386px;background:#f0e28a;"></div>
<div style="left:65.4px;top:206px;width:1px;height:386px;background:rgba(0,0,0,0.075);"></div>
<div style="left:82.2px;top:206px;width:1px;height:386px;background:rgba(0,0,0,0.075);"></div>
<div style="left:99.1px;top:206px;width:1px;height:386px;background:rgba(0,0,0,0.075);"></div>
<div style="left:149.7px;top:206px;width:1px;height:386px;background:rgba(0,0,0,0.075);"></div>
<div style="left:166.5px;top:206px;width:1px;height:386px;background:rgba(0,0,0,0.075);"></div>
<div style="left:183.4px;top:206px;width:1px;height:386px;background:rgba(0,0,0,0.075);"></div>
<div style="left:200.2px;top:206px;width:1px;height:386px;background:rgba(0,0,0,0.075);"></div>
<div style="left:217.1px;top:206px;width:1px;height:386px;background:rgba(0,0,0,0.075);"></div>
<div style="left:233.9px;top:206px;width:1px;height:386px;background:rgba(0,0,0,0.075);"></div>
<div style="left:250.8px;top:206px;width:1px;height:386px;background:rgba(0,0,0,0.075);"></div>
<div style="left:267.6px;top:206px;width:1px;height:386px;background:rgba(0,0,0,0.075);"></div>
<div style="left:66.0px;top:252.3px;width:50.0px;height:15.1px;background:#e2e2e2;"></div>
<div style="left:82.2px;top:252.3px;width:0.7px;height:15.1px;background:rgba(255,255,255,0.55);"></div>
<div style="left:99.1px;top:252.3px;width:0.7px;height:15.1px;background:rgba(255,255,255,0.55);"></div>
<div style="left:66.0px;top:253.9px;width:16.25px;height:13px;overflow:hidden;">
<span class="t" style="left:2.5px;top:0px;font-size:10px;line-height:13px;color:#2a2a9a;-webkit-text-stroke:0.3px #2a2a9a;transform:scaleX(0.733)">O-R</span>
</div>
<div style="left:66.0px;top:267.7px;width:66.8px;height:15.1px;background:#0b800b;"></div>
<div style="left:82.2px;top:267.7px;width:0.7px;height:15.1px;background:rgba(255,255,255,0.55);"></div>
<div style="left:99.1px;top:267.7px;width:0.7px;height:15.1px;background:rgba(255,255,255,0.55);"></div>
<div style="left:116.0px;top:267.7px;width:0.7px;height:15.1px;background:rgba(255,255,255,0.55);"></div>
<div style="left:66.0px;top:269.3px;width:16.25px;height:13px;overflow:hidden;">
<span class="t" style="left:2.5px;top:0px;font-size:10px;line-height:13px;color:#e8f5e8;-webkit-text-stroke:0.14px #e8f5e8;transform:scaleX(0.747)">I-PP</span>
</div>
<div style="left:133.4px;top:283.1px;width:100.5px;height:15.1px;background:#0b800b;"></div>
<div style="left:149.7px;top:283.1px;width:0.7px;height:15.1px;background:rgba(255,255,255,0.55);"></div>
<div style="left:166.5px;top:283.1px;width:0.7px;height:15.1px;background:rgba(255,255,255,0.55);"></div>
<div style="left:183.4px;top:283.1px;width:0.7px;height:15.1px;background:rgba(255,255,255,0.55);"></div>
<div style="left:200.2px;top:283.1px;width:0.7px;height:15.1px;background:rgba(255,255,255,0.55);"></div>
<div style="left:217.1px;top:283.1px;width:0.7px;height:15.1px;background:rgba(255,255,255,0.55);"></div>
<div style="left:133.4px;top:284.7px;width:16.25px;height:13px;overflow:hidden;">
<span class="t" style="left:2.5px;top:0px;font-size:10px;line-height:13px;color:#e8f5e8;-webkit-text-stroke:0.14px #e8f5e8;transform:scaleX(0.740)">I-RA</span>
</div>
<div style="left:66.0px;top:313.9px;width:16.2px;height:15.1px;background:#b40404;"></div>
<div style="left:66.0px;top:315.5px;width:16.25px;height:13px;overflow:hidden;">
<span class="t" style="left:2.5px;top:0px;font-size:10px;line-height:13px;color:#f5d060;-webkit-text-stroke:0.14px #f5d060;transform:scaleX(0.724)">I-GA</span>
</div>
<div style="left:66.0px;top:329.4px;width:33.1px;height:15.1px;background:#b40404;"></div>
<div style="left:82.2px;top:329.4px;width:0.7px;height:15.1px;background:rgba(255,255,255,0.55);"></div>
<div style="left:66.0px;top:331.0px;width:16.25px;height:13px;overflow:hidden;">
<span class="t" style="left:2.5px;top:0px;font-size:10px;line-height:13px;color:#f5d060;-webkit-text-stroke:0.14px #f5d060;transform:scaleX(0.724)">I-GA</span>
</div>
<div style="left:66.0px;top:391.0px;width:50.0px;height:15.1px;background:#b40404;"></div>
<div style="left:82.2px;top:391.0px;width:0.7px;height:15.1px;background:rgba(255,255,255,0.55);"></div>
<div style="left:99.1px;top:391.0px;width:0.7px;height:15.1px;background:rgba(255,255,255,0.55);"></div>
<div style="left:66.0px;top:392.6px;width:16.25px;height:13px;overflow:hidden;">
<span class="t" style="left:2.5px;top:0px;font-size:10px;line-height:13px;color:#f5d060;-webkit-text-stroke:0.14px #f5d060;transform:scaleX(0.740)">I-RA</span>
</div>
<div style="left:116.6px;top:391.0px;width:100.5px;height:15.1px;background:#86fdfd;"></div>
<div style="left:132.8px;top:391.0px;width:0.7px;height:15.1px;background:rgba(255,255,255,0.55);"></div>
<div style="left:149.7px;top:391.0px;width:0.7px;height:15.1px;background:rgba(255,255,255,0.55);"></div>
<div style="left:166.5px;top:391.0px;width:0.7px;height:15.1px;background:rgba(255,255,255,0.55);"></div>
<div style="left:183.4px;top:391.0px;width:0.7px;height:15.1px;background:rgba(255,255,255,0.55);"></div>
<div style="left:200.2px;top:391.0px;width:0.7px;height:15.1px;background:rgba(255,255,255,0.55);"></div>
<div style="left:116.6px;top:392.6px;width:16.25px;height:13px;overflow:hidden;">
<span class="t" style="left:2.5px;top:0px;font-size:10px;line-height:13px;color:#2030b0;-webkit-text-stroke:0.3px #2030b0;transform:scaleX(0.744)">C-G</span>
</div>
<div style="left:66.0px;top:421.9px;width:66.8px;height:15.1px;background:#0b800b;"></div>
<div style="left:82.2px;top:421.9px;width:0.7px;height:15.1px;background:rgba(255,255,255,0.55);"></div>
<div style="left:99.1px;top:421.9px;width:0.7px;height:15.1px;background:rgba(255,255,255,0.55);"></div>
<div style="left:116.0px;top:421.9px;width:0.7px;height:15.1px;background:rgba(255,255,255,0.55);"></div>
<div style="left:66.0px;top:423.5px;width:16.25px;height:13px;overflow:hidden;">
<span class="t" style="left:2.5px;top:0px;font-size:10px;line-height:13px;color:#e8f5e8;-webkit-text-stroke:0.14px #e8f5e8;transform:scaleX(0.747)">I-TR</span>
</div>
<div style="left:82.8px;top:452.7px;width:50.0px;height:15.1px;background:#0b800b;"></div>
<div style="left:99.1px;top:452.7px;width:0.7px;height:15.1px;background:rgba(255,255,255,0.55);"></div>
<div style="left:116.0px;top:452.7px;width:0.7px;height:15.1px;background:rgba(255,255,255,0.55);"></div>
<div style="left:66.0px;top:452.7px;width:16.2px;height:15.1px;background:#4682b4;"></div>
<div style="left:66.0px;top:454.3px;width:16.25px;height:13px;overflow:hidden;">
<span class="t" style="left:2.5px;top:0px;font-size:10px;line-height:13px;color:#e8f0f8;-webkit-text-stroke:0.14px #e8f0f8;transform:scaleX(0.750)">I-CA</span>
</div>
<div style="left:269px;top:391.0px;width:7px;height:15px;background:#f07830;"></div>
<span class="t" style="left:270.5px;top:392.3px;font-size:10.12px;line-height:13px;color:#222;-webkit-text-stroke:0.3px #222;transform:scaleX(0.786)">R</span>
<div style="left:2.4px;top:592.5px;width:273.6px;height:14.5px;background:#f4f4f4;"></div>
<div style="left:2.4px;top:592.5px;width:273.6px;height:13px;background:#cbcbcb;"></div>
<div style="left:2.4px;top:592.5px;width:11.6px;height:13px;background:#f0f0f0;"></div>
<svg style="left:6px;top:596px;" width="5" height="8"><path d="M4.5 0.5L1 4L4.5 7.5" fill="none" stroke="#444" stroke-width="1.3"/></svg>
<span class="t" style="left:38px;top:613.5px;font-size:11.4px;line-height:15px;color:#f2c400;font-weight:bold;-webkit-text-stroke:0.1px #f2c400;transform:scaleX(0.829)">95/1740</span>
<div style="left:110px;top:612px;width:756px;height:13px;background:#e6e6e6;border-top:1px solid #bcbcbc;border-bottom:1px solid #fff;"></div>
<div style="left:110px;top:612px;width:41px;height:13px;background:#22b83a;background:radial-gradient(ellipse 60% 70% at 40% 100%,rgba(255,255,255,0.38),rgba(255,255,255,0) 100%),linear-gradient(90deg,#4cd460,#3ecb55 40%,#10ae2a);"></div>
<span class="t" style="left:897px;top:613.5px;font-size:11.4px;line-height:15px;color:#f0c800;font-weight:bold;-webkit-text-stroke:0.1px #f0c800;transform:scaleX(0.750)">5,46%</span>
<div style="left:2px;top:632px;width:955px;height:4.5px;background:#a8966e;background:linear-gradient(90deg,#a8966e,#a8966e 55%,#d4c8b0 85%,#efe6e0);"></div>
<div style="left:0px;top:636.6px;width:958.6px;height:1.2px;background:#fff;"></div>
<div style="left:0px;top:643.3px;width:960px;height:1.5px;background:#9a9a9a;"></div>
<div style="left:1px;top:645px;width:957px;height:24px;background:#000;border:1px solid #555;border-top:none;"></div>
<svg style="left:5px;top:647px;" width="16" height="19"><path d="M11 0.5C13.5 0.5 14 2 12.5 3C11.5 8 11 12 8.5 15C6 17.5 2 17 0.5 14.5C2.5 15.5 5 15 6.5 12.5C8.5 9 8.5 4 11 0.5Z" fill="#4a3aa8"/></svg>
<span class="t" style="left:20px;top:652.5px;font-size:8.55px;line-height:11px;color:#4a3f8c;font-weight:bold;-webkit-text-stroke:0.25px #4a3f8c;letter-spacing:1px;transform:scaleX(0.973)">ULISES</span>
<span class="t" style="left:69px;top:651.5px;font-size:10.12px;line-height:13px;color:#3f6fd8;-webkit-text-stroke:0.3px #3f6fd8;transform:scaleX(0.816)">MGC-2014</span>
<span class="t" style="left:136px;top:650.5px;font-size:11.04px;line-height:14px;color:#4a78e0;text-decoration:underline;-webkit-text-stroke:0.3px #4a78e0;transform:scaleX(0.906)">www.ulisesgestion.com.ar</span>
<span class="t" style="left:699px;top:651.0px;font-size:10.12px;line-height:13px;color:#86c0f0;-webkit-text-stroke:0.14px #86c0f0;transform:scaleX(0.798)">Dispo.Mem.: 29,96%</span>
<div style="left:778px;top:651px;width:49px;height:11px;background:#e8e8e8;border:1px solid #fff;"></div>
<div style="left:779px;top:652px;width:33px;height:9px;background:#12b02a;"></div>
<span class="t" style="left:830px;top:651.0px;font-size:10.12px;line-height:13px;color:#86c0f0;-webkit-text-stroke:0.14px #86c0f0;transform:scaleX(0.796)">Dispo.en C\: 46,21%</span>
<div style="left:907px;top:651px;width:50px;height:11px;background:#e8e8e8;border:1px solid #fff;"></div>
<div style="left:908px;top:652px;width:26px;height:9px;background:#12b02a;"></div>
<div style="left:0px;top:670px;width:960px;height:1.2px;background:#a8a8a8;"></div>
<div style="left:0px;top:672px;width:960px;height:36px;background:#252526;"></div>
<div style="left:0px;top:672px;width:34px;height:36px;background:#2c2c2c;"></div>
<div style="left:34px;top:672px;width:241.5px;height:36px;background:#343434;border:1px solid #4a4a4a;"></div>
<div style="left:11px;top:683px;width:5.5px;height:6.5px;background:#fff;"></div>
<div style="left:17.5px;top:683px;width:5.5px;height:6.5px;background:#fff;"></div>
<div style="left:11px;top:690.5px;width:5.5px;height:6.5px;background:#fff;"></div>
<div style="left:17.5px;top:690.5px;width:5.5px;height:6.5px;background:#fff;"></div>
<svg style="left:41px;top:682px;" width="14" height="16"><circle cx="9" cy="5.5" r="3.6" fill="none" stroke="#e0e0e0" stroke-width="1.2"/><path d="M6.5 8.5L1 15" stroke="#e0e0e0" stroke-width="1.2"/></svg>
<span class="t" style="left:62px;top:682.5px;font-size:11.96px;line-height:16px;color:#e4e4e4;-webkit-text-stroke:0.14px #e4e4e4;transform:scaleX(0.850)">Escribe aquí para buscar</span>
<svg style="left:284.8px;top:680.4px;" width="14.4" height="19.2" viewBox="0 0 14 16" preserveAspectRatio="none"><rect x="2" y="3" width="7" height="10" fill="none" stroke="#e8e8e8" stroke-width="1.3"/><path d="M2 1H9M2 15H9" stroke="#e8e8e8" stroke-width="1"/><rect x="11" y="2" width="2" height="2" fill="#e8e8e8"/><rect x="11" y="6" width="2" height="8" fill="#e8e8e8"/></svg>
<svg style="left:315.8px;top:680.4px;" width="16.5" height="19.2" viewBox="0 0 16 16" preserveAspectRatio="none"><rect x="0.5" y="0.5" width="15" height="15" fill="#050505" stroke="#bdbdbd"/><rect x="1" y="1" width="14" height="2" fill="#777"/><path d="M3 6L5 7.5L3 9M6 9H10" stroke="#eee" stroke-width="0.9" fill="none"/></svg>
<svg style="left:343.8px;top:680.4px;" width="16.5" height="19.2" viewBox="0 0 16 16" preserveAspectRatio="none"><rect x="0.5" y="1.5" width="15" height="12" fill="#3aa0e8" stroke="#8fd0ff"/><circle cx="5" cy="6" r="2.5" fill="#f0c040"/><rect x="9" y="4" width="5" height="2" fill="#dff"/><rect x="9" y="8" width="5" height="2" fill="#dff"/><rect x="2" y="10" width="5" height="2" fill="#dff"/></svg>
<svg style="left:370.8px;top:679.2px;" width="16.5" height="21.6" viewBox="0 0 16 18" preserveAspectRatio="none"><path d="M0.5 2H6L7.5 4H15.5V16H0.5Z" fill="#f4b400"/><rect x="0.5" y="5" width="15" height="11" fill="#fcd35c"/><rect x="3" y="10" width="10" height="6" fill="#3b8fe0"/><rect x="5.5" y="13" width="5" height="3" fill="#fcd35c"/></svg>
<div style="left:368.5px;top:706px;width:21px;height:2px;background:#8fd8f8;"></div>
<svg style="left:398.8px;top:678.0px;" width="16.5" height="24.0" viewBox="0 0 16 20" preserveAspectRatio="none"><rect x="0" y="0" width="16" height="20" fill="#2e2e2e"/><path d="M11 2C13 2 13.5 3 12.5 4C11.5 9 11.5 13 9 16C7 18 4 17.5 3 16C5 16.5 6.5 16 7.5 13.5C9 10 9 5 11 2Z" fill="#f2f2f2"/></svg>
<div style="left:396.5px;top:706px;width:21px;height:2px;background:#8fd8f8;"></div>
<svg style="left:424.8px;top:679.2px;" width="18.5" height="21.6" viewBox="0 0 18 18" preserveAspectRatio="none"><path d="M9 1L17 9L9 17L1 9Z" fill="#0a0a0a" stroke="#f4f4f4" stroke-width="1.2"/></svg>
<span class="t" style="left:430.6px;top:682.2px;font-size:12px;line-height:16px;color:#f4e400;font-weight:bold;transform:scaleX(0.756)">H</span>
<svg style="left:452.8px;top:679.2px;" width="16.5" height="21.6" viewBox="0 0 16 18" preserveAspectRatio="none"><path d="M6 1H10L15 14V17H1V14Z" fill="#0c8a1c"/><path d="M4.5 5H11.5M3.5 8H12.5M2.5 11H13.5M1.5 14H14.5" stroke="#34d048" stroke-width="1.2"/><rect x="6.5" y="13" width="3" height="3" fill="#052"/></svg>
<svg style="left:480.8px;top:679.2px;" width="16.5" height="21.6" viewBox="0 0 16 18" preserveAspectRatio="none"><path d="M11 1L15 3V15L11 17L3 10.5L1.5 12L0 11V7L1.5 6L3 7.5Z" fill="#8a52c8"/><path d="M11 5.5V12.5L6.5 9Z" fill="#212121"/></svg>
<div style="left:479.0px;top:706px;width:20px;height:2px;background:#8fd8f8;"></div>
<svg style="left:506.8px;top:679.2px;" width="16.5" height="21.6" viewBox="0 0 16 18" preserveAspectRatio="none"><circle cx="8" cy="8" r="7" fill="#3ddc84"/><circle cx="8" cy="7" r="3" fill="#173a2a"/><circle cx="8" cy="7" r="1.2" fill="#e8fff0"/><path d="M8 9L4 17M8 9L12 17" stroke="#cfe8d8" stroke-width="1.2"/></svg>
<svg style="left:532.2px;top:679.2px;" width="17.5" height="21.6" viewBox="0 0 17 18" preserveAspectRatio="none"><rect x="0" y="0" width="17" height="18" rx="2" fill="#1f4f72"/><path d="M3 5C6 5 9 7 11 10C12 12 13 14 14 16M4 8C6 9 8 11 9 15" stroke="#d8e8f0" stroke-width="1" fill="none"/><path d="M12 3L14 5M14 3L12 5" stroke="#fff" stroke-width="0.8"/></svg>
<svg style="left:559.8px;top:679.2px;" width="16.5" height="21.6" viewBox="0 0 16 18" preserveAspectRatio="none"><rect x="1" y="1" width="5" height="7" fill="#e8b020"/><path d="M7 2H14V12" stroke="#3a8a3a" stroke-width="1" fill="none" stroke-dasharray="2 1.5"/><path d="M4 16L13 7M5 8L14 17" stroke="#d0d0d0" stroke-width="2"/><path d="M2 12V17H8" stroke="#3a8a3a" stroke-width="1" fill="none" stroke-dasharray="2 1.5"/></svg>
<svg style="left:587.2px;top:678.0px;" width="15.5" height="24.0" viewBox="0 0 15 20" preserveAspectRatio="none"><path d="M1 1H11L14 4V19H1Z" fill="#e4ecf4" stroke="#a8b8c8" stroke-width="0.8"/><path d="M3 5H11M3 8H11M3 11H11M3 14H9" stroke="#9ab" stroke-width="1"/><rect x="10" y="14" width="4" height="5" fill="#4a90e0"/></svg>
<svg style="left:612.8px;top:678.6px;" width="16.5" height="22.8" viewBox="0 0 16 19" preserveAspectRatio="none"><rect x="0" y="0" width="16" height="19" rx="5" fill="#3d8bf0"/><rect x="3" y="7" width="7" height="5.5" rx="1" fill="#fff"/><path d="M10.5 9.5L13.5 7.5V12L10.5 10.5Z" fill="#fff"/></svg>
<svg style="left:639.8px;top:678.6px;" width="16.5" height="22.8" viewBox="0 0 16 19" preserveAspectRatio="none"><circle cx="8" cy="10" r="7.5" fill="#2a6ad0"/><circle cx="8" cy="10" r="4" fill="#8cc0f8"/><circle cx="8" cy="10" r="1.5" fill="#fff"/><path d="M9 1L15 2L12 7Z" fill="#f08020"/><circle cx="4" cy="5" r="2.5" fill="#e8f0ff"/><circle cx="13" cy="15" r="2.5" fill="#e8f0ff"/></svg>
<svg style="left:666.8px;top:679.2px;" width="16.5" height="21.6" viewBox="0 0 16 18" preserveAspectRatio="none"><circle cx="8" cy="9" r="8" fill="#1c78d0"/><path d="M2 12C2 6 6 3 10 3C14 3 16 6 16 9C12 5 7 7 7 11C7 14 10 16 13 15C9 19 2 17 2 12Z" fill="#38d0a0"/><path d="M7 11C7 8 10 7 12 9C12 11 9 11 9 13C9 14 10 15 12 15C9 16 7 14 7 11Z" fill="#0c4a9a"/></svg>
<svg style="left:692.8px;top:678.6px;" width="16.5" height="22.8" viewBox="0 0 16 19" preserveAspectRatio="none"><rect x="5" y="0.5" width="10.5" height="18" fill="#f4f8ff" stroke="#a8c0e0" stroke-width="0.7"/><rect x="0" y="3" width="10" height="13" fill="#2a5cb8"/><path d="M7 6H14M7 9H14M11 12H14" stroke="#7a9ad0" stroke-width="1"/></svg>
<span class="t" style="left:694.5px;top:683.0px;font-size:10.45px;line-height:14px;color:#fff;font-weight:bold;-webkit-text-stroke:0.1px #fff;transform:scaleX(1.150)">W</span>
<div style="left:692.0px;top:706px;width:18px;height:2px;background:#8fd8f8;"></div>
<svg style="left:718.8px;top:678.6px;" width="16.5" height="22.8" viewBox="0 0 16 19" preserveAspectRatio="none"><rect x="5" y="0.5" width="10.5" height="18" fill="#fdf0f4" stroke="#d8a0b8" stroke-width="0.7"/><rect x="0" y="3" width="10" height="13" fill="#c0206a"/><circle cx="12" cy="12" r="3" fill="#e06a9a"/></svg>
<span class="t" style="left:721.5px;top:683.0px;font-size:10.45px;line-height:14px;color:#fff;font-weight:bold;-webkit-text-stroke:0.1px #fff;transform:scaleX(1.188)">A</span>
<div style="left:717.0px;top:706px;width:20px;height:2px;background:#8fd8f8;"></div>
<svg style="left:745.8px;top:678.6px;" width="16.5" height="22.8" viewBox="0 0 16 19" preserveAspectRatio="none"><rect x="5" y="0.5" width="10.5" height="18" fill="#fff4ee" stroke="#e0b098" stroke-width="0.7"/><rect x="0" y="3" width="10" height="13" fill="#e0582a"/><circle cx="12" cy="11" r="3" fill="#f09070"/></svg>
<span class="t" style="left:749px;top:683.0px;font-size:10.45px;line-height:14px;color:#fff;font-weight:bold;-webkit-text-stroke:0.1px #fff;transform:scaleX(1.143)">P</span>
<div style="left:744.0px;top:706px;width:20px;height:2px;background:#8fd8f8;"></div>
<div style="left:770px;top:672px;width:24.5px;height:36px;background:#4e4e4e;"></div>
<svg style="left:771.8px;top:679.2px;" width="18.5" height="21.6" viewBox="0 0 18 18" preserveAspectRatio="none"><path d="M9 1L17 9L9 17L1 9Z" fill="#0a0a0a" stroke="#f4f4f4" stroke-width="1.2"/></svg>
<span class="t" style="left:777.6px;top:682.2px;font-size:12px;line-height:16px;color:#f4e400;font-weight:bold;transform:scaleX(0.756)">H</span>
<div style="left:769.0px;top:706px;width:25px;height:2px;background:#8fd8f8;"></div>
<svg style="left:801px;top:686px;" width="10" height="7"><path d="M0.7 6L5 1.2L9.3 6" fill="none" stroke="#f0f0f0" stroke-width="1.2"/></svg>
<svg style="left:816px;top:684px;" width="13" height="13"><path d="M1 4.5H3.5L6.5 1.5V11.5L3.5 8.5H1Z" fill="none" stroke="#f0f0f0" stroke-width="1"/><path d="M8.5 4Q10 6.5 8.5 9M10.5 2.5Q13 6.5 10.5 10.5" fill="none" stroke="#c8c8c8" stroke-width="0.9"/></svg>
<svg style="left:835px;top:684px;" width="11" height="13"><path d="M10 8.5Q7 8.5 7 12M10 5.5Q4 5.5 4 12M10 2.5Q1 2.5 1 12" fill="none" stroke="#d0d0d0" stroke-width="1.1"/><circle cx="9.3" cy="11.3" r="1.4" fill="#f0f0f0"/></svg>
<span class="t" style="left:853px;top:683.5px;font-size:10.12px;line-height:13px;color:#f0f0f0;-webkit-text-stroke:0.14px #f0f0f0;transform:scaleX(0.800)">ESP</span>
<span class="t" style="left:888px;top:675.0px;font-size:11.04px;line-height:14px;color:#f0f0f0;-webkit-text-stroke:0.14px #f0f0f0;transform:scaleX(0.750)">12:15</span>
<span class="t" style="left:878px;top:691.0px;font-size:11.04px;line-height:14px;color:#f0f0f0;-webkit-text-stroke:0.14px #f0f0f0;transform:scaleX(0.764)">08/07/2020</span>
<svg style="left:931px;top:682px;" width="12" height="15"><path d="M0.7 0.7H10.3V11H6L3.5 13.5V11H0.7Z" fill="#f0f0f0"/><path d="M2.5 3.5H8.5M2.5 6H8.5M2.5 8.5H6" stroke="#222" stroke-width="0.9"/><circle cx="9.5" cy="12" r="2.2" fill="#f0f0f0" stroke="#222" stroke-width="0.7"/></svg>
<div style="left:956px;top:672px;width:1px;height:36px;background:#5a5a5a;"></div>
<div style="left:275px;top:17.5px;width:420.8px;height:649px;background:#fcfcfc;border:1px solid #a0a0a0;border-top-color:#8c8c8c;border-right-color:#b4b4b4;border-bottom-color:#fff;box-shadow:0 1px 8px 0 rgba(0,0,0,0.28);"></div>
<div style="left:276px;top:19px;width:418.8px;height:27px;background:#fff;"></div>
<div style="left:276px;top:46px;width:418.8px;height:2px;background:#efefef;"></div>
<div style="left:688px;top:48px;width:6px;height:580px;background:#efefef;"></div>
<svg style="left:282px;top:25px;" width="10" height="13"><rect x="0.5" y="1.5" width="9" height="11" fill="#f4f4f4" stroke="#b8b8b8" stroke-width="0.6"/><rect x="1" y="2" width="3.5" height="4" fill="#d83020"/><rect x="5" y="0.5" width="4" height="6" fill="#f0b020"/><rect x="1" y="7" width="3.5" height="4" fill="#3a80e0"/><rect x="5" y="7.5" width="4" height="3" fill="#c8c8c8"/></svg>
<span class="t" style="left:296px;top:24.5px;font-size:11.8px;line-height:15px;color:#1a1a1a;-webkit-text-stroke:0.3px #1a1a1a;transform:scaleX(0.654)">Estadísticas de Reservas</span>
<div style="left:612px;top:31px;width:7px;height:1px;background:#222;"></div>
<div style="left:643px;top:27px;width:8px;height:9px;background:transparent;border:1px solid #222;"></div>
<svg style="left:676px;top:27px;" width="8" height="9"><path d="M0 0L8 9M8 0L0 9" stroke="#222" stroke-width="1" fill="none"/></svg>
<div style="left:280px;top:54px;width:407.5px;height:50px;background:#fff;border:1px solid #e6e6e6;"></div>
<div style="left:280px;top:106px;width:408px;height:1.2px;background:#ececec;"></div>
<div style="left:282.5px;top:59px;width:35.8px;height:36px;background:#050505;"></div>
<svg style="left:293px;top:61px;" width="14" height="22"><path d="M10 1C12 0.3 13 1.5 12 2.6C10.8 8 10.8 13 9 17C7.2 20.6 2.6 20.8 1 17.6C0.6 16.6 1.4 16 2.2 16.6C3.8 17.6 5.6 16.8 6.4 14.4C8 10 7.8 4.5 10 1Z" fill="#5040c0"/><path d="M9 17C7.5 19.5 4 20 2 18" stroke="#7a68e8" stroke-width="0.8" fill="none"/></svg>
<span class="t" style="left:284.8px;top:82.7px;font-size:10px;line-height:13px;color:#4c3c9c;font-weight:bold;-webkit-text-stroke:0.3px #4c3c9c;transform:scaleX(0.794)">ULISES</span>
<span class="t" style="left:315.3px;top:82.5px;font-size:7.6px;line-height:10px;color:#4c3c9c;font-weight:bold;transform:scaleX(0.600)">&#x27;</span>
<span class="t" style="left:325px;top:58.7px;font-size:10.12px;line-height:13px;color:#5691c9;-webkit-text-stroke:0.3px #5691c9;transform:scaleX(0.719)">GRUPO MGC-ULISES - 000 - MGC-HOTELES - 20148126160</span>
<span class="t" style="left:325px;top:71.7px;font-size:10.12px;line-height:13px;color:#5691c9;-webkit-text-stroke:0.3px #5691c9;transform:scaleX(0.819)">Monteagudo 1803 1 3. - Vicente Lopez - Buenos Aires</span>
<span class="t" style="left:327.5px;top:84.1px;font-size:10.12px;line-height:13px;color:#5691c9;-webkit-text-stroke:0.3px #5691c9;transform:scaleX(0.857)">/ www.ulisesgestion.com.ar</span>
<span class="t" style="left:635px;top:60.5px;font-size:11.04px;line-height:14px;color:#5691c9;-webkit-text-stroke:0.3px #5691c9;transform:scaleX(0.855)">08/07/2020</span>
<span class="t" style="left:647px;top:80.5px;font-size:11.04px;line-height:14px;color:#5691c9;-webkit-text-stroke:0.3px #5691c9;transform:scaleX(0.767)">12:14:56</span>
<div style="left:280px;top:108px;width:407.5px;height:20px;background:#fff;"></div>
<div style="left:280px;top:127.8px;width:408px;height:2.6px;background:#efefef;"></div>
<span class="t" style="left:433.5px;top:108.0px;font-size:13.11px;line-height:17px;color:#0a6c0a;font-weight:bold;-webkit-text-stroke:0.25px #0a6c0a;transform:scaleX(0.892)">- ESTADISTICAS -</span>
<div style="left:280px;top:136px;width:407.5px;height:486px;background:#fff;border:1px solid #e4e4e4;"></div>
<div style="left:276px;top:622.5px;width:418.8px;height:6px;background:#efefef;"></div>
<div style="left:286px;top:145.3px;width:393px;height:20.6px;background:#fff;border:1px solid #6a6a6a;"></div>
<span class="t" style="left:289px;top:147.5px;font-size:12.35px;line-height:16px;color:#1c1c8a;font-weight:bold;-webkit-text-stroke:0.25px #1c1c8a;transform:scaleX(0.736)">De domingo, 05 de julio de 2020 a miércoles, 02 de septiembre de 2020 (60 ds.)</span>
<span class="t" style="left:291px;top:170.5px;font-size:10.12px;line-height:13px;color:#7c7c7c;-webkit-text-stroke:0.3px #7c7c7c;transform:scaleX(0.860)">Unidades</span>
<span class="t" style="left:355px;top:170.2px;font-size:11.69px;line-height:15px;color:#111;font-weight:bold;-webkit-text-stroke:0.25px #111;transform:scaleX(0.769)">29</span>
<span class="t" style="left:588px;top:170.5px;font-size:10.12px;line-height:13px;color:#7c7c7c;-webkit-text-stroke:0.3px #7c7c7c;transform:scaleX(0.915)">Disponible</span>
<span class="t" style="left:656px;top:170.2px;font-size:11.69px;line-height:15px;color:#111;font-weight:bold;-webkit-text-stroke:0.25px #111;transform:scaleX(0.731)">1740</span>
<span class="t" style="left:291px;top:189.5px;font-size:10.12px;line-height:13px;color:#7c7c7c;-webkit-text-stroke:0.3px #7c7c7c;transform:scaleX(0.774)">PAX x Unidad</span>
<span class="t" style="left:355px;top:189.0px;font-size:11.4px;line-height:15px;color:#111;font-weight:bold;-webkit-text-stroke:0.25px #111;transform:scaleX(0.769)">58</span>
<span class="t" style="left:588px;top:189.5px;font-size:10.12px;line-height:13px;color:#7c7c7c;-webkit-text-stroke:0.3px #7c7c7c;transform:scaleX(0.826)">Ocupadas</span>
<span class="t" style="left:665px;top:189.0px;font-size:11.4px;line-height:15px;color:#111;font-weight:bold;-webkit-text-stroke:0.25px #111;transform:scaleX(0.769)">18</span>
<span class="t" style="left:291px;top:211.5px;font-size:10.12px;line-height:13px;color:#7c7c7c;-webkit-text-stroke:0.3px #7c7c7c;transform:scaleX(0.833)">Ocupacion x Unidades</span>
<span class="t" style="left:588px;top:207.5px;font-size:10.12px;line-height:13px;color:#7c7c7c;-webkit-text-stroke:0.3px #7c7c7c;transform:scaleX(0.821)">Libres</span>
<span class="t" style="left:656px;top:207.0px;font-size:11.4px;line-height:15px;color:#111;font-weight:bold;-webkit-text-stroke:0.25px #111;transform:scaleX(0.760)">1722</span>
<div style="left:291px;top:226px;width:293px;height:15px;background:#e6e6e6;border:1px solid #c4c4c4;"></div>
<div style="left:291px;top:226px;width:3px;height:15px;background:#18b030;"></div>
<span class="t" style="left:605px;top:226.5px;font-size:12.35px;line-height:16px;color:#111;font-weight:bold;-webkit-text-stroke:0.25px #111;transform:scaleX(0.737)">95/1740 (5,46% )</span>
<div style="left:284px;top:250px;width:399px;height:1px;background:#d0d0d0;"></div>
<div style="left:289px;top:258px;width:389.8px;height:20px;background:#fff;border:1px solid #8a8a8a;border-top:1.5px solid #6a6a6a;"></div>
<span class="t" style="left:292px;top:260.5px;font-size:12.35px;line-height:16px;color:#1c1c8a;font-weight:bold;-webkit-text-stroke:0.25px #1c1c8a;transform:scaleX(0.734)">Al miércoles, 08 julio 2020</span>
<div style="left:581px;top:259px;width:79px;height:18px;background:#fff;border-left:1px solid #8a8a8a;border-right:1px solid #8a8a8a;"></div>
<span class="t" style="left:582.5px;top:261.5px;font-size:10.12px;line-height:13px;color:#222;-webkit-text-stroke:0.3px #222;transform:scaleX(0.794)">08/07/2020</span>
<svg style="left:641.3px;top:263px;" width="10" height="10"><rect x="0.5" y="0.5" width="6" height="8.5" fill="#e8e8e8" stroke="#888" stroke-width="0.8"/><rect x="1.5" y="1.5" width="4" height="2" fill="#bbb"/></svg>
<svg style="left:650.8px;top:266px;" width="6" height="4"><path d="M0 0H6L3 4Z" fill="#3a5a9a"/></svg>
<div style="left:659.4px;top:258px;width:19.4px;height:20px;background:#fdfdfd;border:1px solid #8a8a8a;"></div>
<svg style="left:665.5px;top:263.5px;" width="8" height="10"><path d="M1 4.6A3 3.6 0 0 1 6.6 3" fill="none" stroke="#2a2a2a" stroke-width="1.5"/><path d="M7 5.4A3 3.6 0 0 1 1.4 7" fill="none" stroke="#2a2a2a" stroke-width="1.5"/><path d="M5 0.4L7.8 0.8L7.4 4Z" fill="#2a2a2a"/><path d="M3 9.6L0.2 9.2L0.6 6Z" fill="#2a2a2a"/></svg>
<span class="t" style="left:291px;top:280.5px;font-size:10.12px;line-height:13px;color:#7c7c7c;-webkit-text-stroke:0.3px #7c7c7c;transform:scaleX(0.843)">x Unidades</span>
<div style="left:353px;top:283px;width:235px;height:11.5px;background:#e6e6e6;border:1px solid #c4c4c4;border-left:none;"></div>
<div style="left:353px;top:283px;width:31.5px;height:11.2px;background:#22b83a;background:radial-gradient(ellipse 60% 70% at 40% 100%,rgba(255,255,255,0.38),rgba(255,255,255,0) 100%),linear-gradient(90deg,#4cd460,#3ecb55 40%,#10ae2a);"></div>
<span class="t" style="left:617px;top:282.5px;font-size:12.35px;line-height:16px;color:#111;font-weight:bold;-webkit-text-stroke:0.25px #111;transform:scaleX(0.744)">4/29 (13,79%)</span>
<span class="t" style="left:291px;top:298.5px;font-size:10.12px;line-height:13px;color:#7c7c7c;-webkit-text-stroke:0.3px #7c7c7c;transform:scaleX(0.667)">x PAX</span>
<div style="left:353px;top:302px;width:235px;height:11.5px;background:#e6e6e6;border:1px solid #c4c4c4;border-left:none;"></div>
<div style="left:353px;top:302px;width:31.5px;height:11.2px;background:#22b83a;background:radial-gradient(ellipse 60% 70% at 40% 100%,rgba(255,255,255,0.38),rgba(255,255,255,0) 100%),linear-gradient(90deg,#4cd460,#3ecb55 40%,#10ae2a);"></div>
<span class="t" style="left:617px;top:300.5px;font-size:12.35px;line-height:16px;color:#111;font-weight:bold;-webkit-text-stroke:0.25px #111;transform:scaleX(0.744)">8/58 (13,79%)</span>
<span class="t" style="left:287px;top:325.5px;font-size:10.12px;line-height:13px;color:#7c7c7c;-webkit-text-stroke:0.3px #7c7c7c;transform:scaleX(0.837)">Unidades Ocupadas</span>
<span class="t" style="left:473.5px;top:324.5px;font-size:11.4px;line-height:15px;color:#111;font-weight:bold;-webkit-text-stroke:0.25px #111;transform:scaleX(0.917)">4</span>
<span class="t" style="left:494px;top:325.5px;font-size:10.12px;line-height:13px;color:#7c7c7c;-webkit-text-stroke:0.3px #7c7c7c;transform:scaleX(0.849)">Unidades Libres</span>
<span class="t" style="left:670px;top:324.5px;font-size:11.4px;line-height:15px;color:#111;font-weight:bold;-webkit-text-stroke:0.25px #111;transform:scaleX(0.692)">25</span>
<div style="left:286.7px;top:340px;width:197px;height:273.8px;background:#fff;border:1px solid #868686;"></div>
<div style="left:486px;top:340px;width:197px;height:273.8px;background:#fff;border:1px solid #868686;"></div>
<span class="t" style="left:288px;top:341.5px;font-size:10.5px;line-height:14px;color:#111;-webkit-text-stroke:0.3px #111;transform:scaleX(0.778)">105</span>
<span class="t" style="left:288px;top:355.1px;font-size:10.5px;line-height:14px;color:#111;-webkit-text-stroke:0.3px #111;transform:scaleX(0.778)">213</span>
<span class="t" style="left:288px;top:368.7px;font-size:10.5px;line-height:14px;color:#111;-webkit-text-stroke:0.3px #111;transform:scaleX(0.778)">215</span>
<span class="t" style="left:288px;top:382.2px;font-size:10.5px;line-height:14px;color:#111;-webkit-text-stroke:0.3px #111;transform:scaleX(0.778)">217</span>
<span class="t" style="left:487.5px;top:341.5px;font-size:10.5px;line-height:14px;color:#111;-webkit-text-stroke:0.3px #111;transform:scaleX(0.806)">101</span>
<span class="t" style="left:487.5px;top:355.1px;font-size:10.5px;line-height:14px;color:#111;-webkit-text-stroke:0.3px #111;transform:scaleX(0.806)">102</span>
<span class="t" style="left:487.5px;top:368.7px;font-size:10.5px;line-height:14px;color:#111;-webkit-text-stroke:0.3px #111;transform:scaleX(0.806)">103</span>
<span class="t" style="left:487.5px;top:382.2px;font-size:10.5px;line-height:14px;color:#111;-webkit-text-stroke:0.3px #111;transform:scaleX(0.806)">104</span>
<span class="t" style="left:487.5px;top:395.8px;font-size:10.5px;line-height:14px;color:#111;-webkit-text-stroke:0.3px #111;transform:scaleX(0.806)">106</span>
<span class="t" style="left:487.5px;top:409.4px;font-size:10.5px;line-height:14px;color:#111;-webkit-text-stroke:0.3px #111;transform:scaleX(0.806)">107</span>
<span class="t" style="left:487.5px;top:423.0px;font-size:10.5px;line-height:14px;color:#111;-webkit-text-stroke:0.3px #111;transform:scaleX(0.806)">108</span>
<span class="t" style="left:487.5px;top:436.6px;font-size:10.5px;line-height:14px;color:#111;-webkit-text-stroke:0.3px #111;transform:scaleX(0.806)">109</span>
<span class="t" style="left:487.5px;top:450.1px;font-size:10.5px;line-height:14px;color:#111;-webkit-text-stroke:0.3px #111;transform:scaleX(0.853)">110</span>
<span class="t" style="left:487.5px;top:463.7px;font-size:10.5px;line-height:14px;color:#111;-webkit-text-stroke:0.3px #111;transform:scaleX(0.906)">111</span>
<span class="t" style="left:487.5px;top:477.3px;font-size:10.5px;line-height:14px;color:#111;-webkit-text-stroke:0.3px #111;transform:scaleX(0.853)">112</span>
<span class="t" style="left:487.5px;top:490.9px;font-size:10.5px;line-height:14px;color:#111;-webkit-text-stroke:0.3px #111;transform:scaleX(0.806)">214</span>
<span class="t" style="left:487.5px;top:504.5px;font-size:10.5px;line-height:14px;color:#111;-webkit-text-stroke:0.3px #111;transform:scaleX(0.806)">216</span>
<span class="t" style="left:487.5px;top:518.0px;font-size:10.5px;line-height:14px;color:#111;-webkit-text-stroke:0.3px #111;transform:scaleX(0.806)">218</span>
<span class="t" style="left:487.5px;top:531.6px;font-size:10.5px;line-height:14px;color:#111;-webkit-text-stroke:0.3px #111;transform:scaleX(0.806)">219</span>
<span class="t" style="left:487.5px;top:545.2px;font-size:10.5px;line-height:14px;color:#111;-webkit-text-stroke:0.3px #111;transform:scaleX(0.806)">220</span>
<span class="t" style="left:487.5px;top:558.8px;font-size:10.5px;line-height:14px;color:#111;-webkit-text-stroke:0.3px #111;transform:scaleX(0.806)">221</span>
<span class="t" style="left:487.5px;top:572.4px;font-size:10.5px;line-height:14px;color:#111;-webkit-text-stroke:0.3px #111;transform:scaleX(0.806)">222</span>
<span class="t" style="left:487.5px;top:585.9px;font-size:10.5px;line-height:14px;color:#111;-webkit-text-stroke:0.3px #111;transform:scaleX(0.806)">223</span>
<span class="t" style="left:487.5px;top:599.5px;font-size:10.5px;line-height:14px;color:#111;-webkit-text-stroke:0.3px #111;transform:scaleX(0.806)">224</span>
<span class="t" style="left:536.5px;top:341.5px;font-size:10.5px;line-height:14px;color:#111;-webkit-text-stroke:0.3px #111;transform:scaleX(0.806)">225</span>
<span class="t" style="left:536.5px;top:355.1px;font-size:10.5px;line-height:14px;color:#111;-webkit-text-stroke:0.3px #111;transform:scaleX(0.806)">226</span>
<span class="t" style="left:536.5px;top:368.7px;font-size:10.5px;line-height:14px;color:#111;-webkit-text-stroke:0.3px #111;transform:scaleX(0.806)">227</span>
<span class="t" style="left:536.5px;top:382.2px;font-size:10.5px;line-height:14px;color:#111;-webkit-text-stroke:0.3px #111;transform:scaleX(0.806)">228</span>
<span class="t" style="left:536.5px;top:395.8px;font-size:10.5px;line-height:14px;color:#111;-webkit-text-stroke:0.3px #111;transform:scaleX(0.806)">229</span>
<div style="left:276px;top:628px;width:418.8px;height:37px;background:#d7e4f2;"></div>
<div style="left:276px;top:633.6px;width:418.8px;height:1px;background:#d2d9e2;"></div>
<div style="left:593px;top:638px;width:46px;height:22px;background:#e4e4e4;border:2px solid #1a78d8;"></div>
<span class="t" style="left:603px;top:642.5px;font-size:10.12px;line-height:13px;color:#111;font-family:&quot;Liberation Sans&quot;,sans-serif;-webkit-text-stroke:0.3px #111;transform:scaleX(0.689)">Imprimir</span>
<div style="left:645px;top:638px;width:46px;height:22px;background:#e1e1e1;border:1px solid #adadad;"></div>
<span class="t" style="left:660px;top:642.5px;font-size:10.12px;line-height:13px;color:#111;-webkit-text-stroke:0.3px #111;transform:scaleX(0.750)">Salir</span>
</div>
</body>
</html>
